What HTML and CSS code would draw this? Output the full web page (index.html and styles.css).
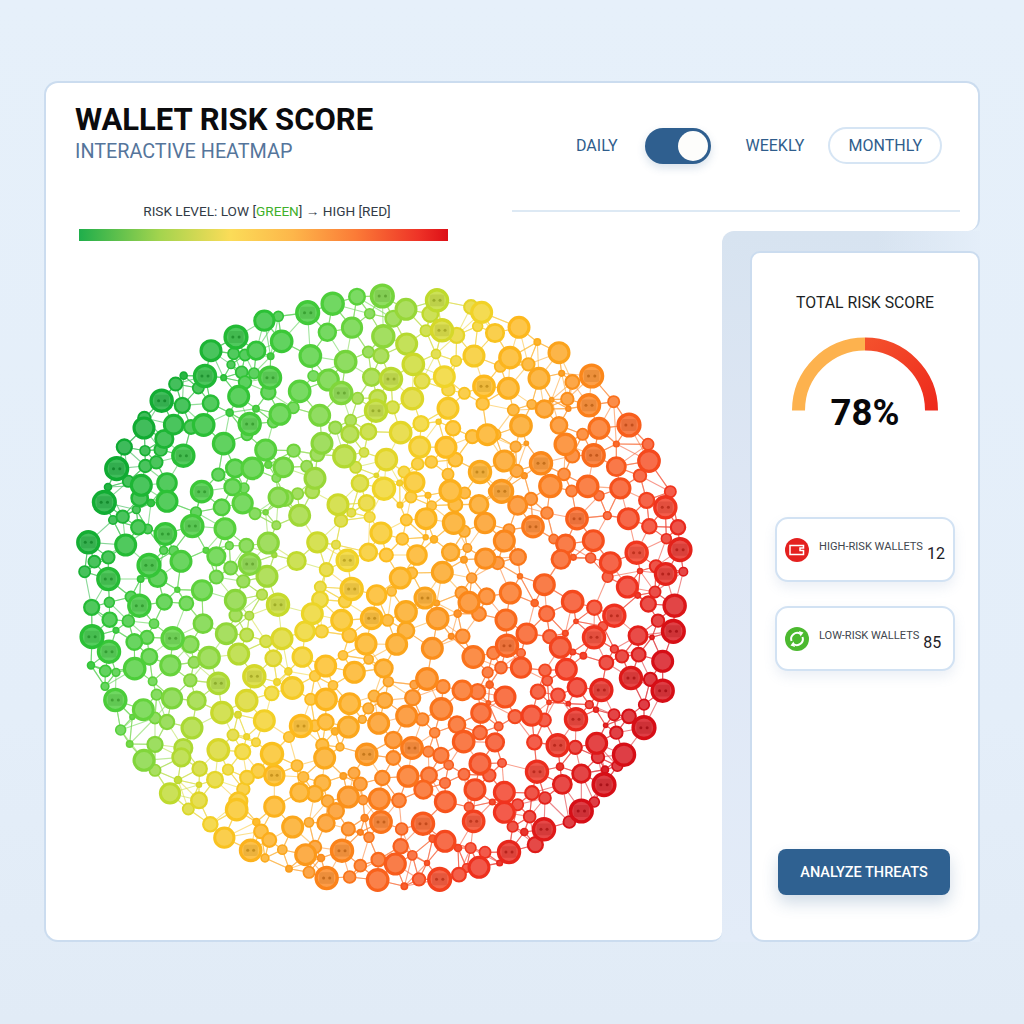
FILE: index.html
```html
<!DOCTYPE html>
<html lang="en">
<head>
    <meta charset="UTF-8">
    <title>Wallet Risk Score</title>
    <link rel="stylesheet" href="styles.css">
</head>
<body>
    <div class="dashboard">
        <div class="top-card">
            <div class="title-block">
                <h1>WALLET RISK SCORE</h1>
                <p>INTERACTIVE HEATMAP</p>
            </div>
            <div class="top-right">
                <div class="range-controls">
                    <span class="range-daily">DAILY</span>
                    <div class="toggle"><div class="knob"></div></div>
                    <span class="range-weekly">WEEKLY</span>
                    <span class="range-monthly">MONTHLY</span>
                </div>
                <div class="divider"></div>
            </div>
        </div>
        <div class="main-row">
            <div class="heatmap">
                <div class="legend">
                    <div class="legend-text">RISK LEVEL: LOW [<span class="green">GREEN</span>] → HIGH [RED]</div>
                    <div class="legend-bar"></div>
                </div>
                <svg id="network" class="network" viewBox="60 280 650 620"></svg>
            </div>
            <div class="side-area">
                <div class="side-card">
                    <h2>TOTAL RISK SCORE</h2>
                    <svg class="gauge" width="146" height="76" viewBox="0 0 146 76">
                        <defs>
                            <linearGradient id="gaugeRed" x1="0" y1="0" x2="1" y2="1">
                                <stop offset="0" stop-color="#f4502c"/>
                                <stop offset="1" stop-color="#ee2a1c"/>
                            </linearGradient>
                        </defs>
                        <path d="M6.5 74.500 A66.500 66.500 0 0 1 73 8" fill="none" stroke="#fdb24e" stroke-width="13"/>
                        <path d="M73 8 A66.500 66.500 0 0 1 139.500 74.500" fill="none" stroke="url(#gaugeRed)" stroke-width="13"/>
                    </svg>
                    <div class="gauge-value">78%</div>
                    <div class="stat stat-first">
                        <div class="stat-icon red">
                            <svg width="24" height="24" viewBox="0 0 24 24">
                                <path d="M5 7.500 H18.500 V10 H15 V12.500 H18.500 V16.500 H5 Z" fill="none" stroke="#fff" stroke-width="1.500"/>
                            </svg>
                        </div>
                        <span class="stat-label">HIGH-RISK WALLETS</span>
                        <span class="stat-value">12</span>
                    </div>
                    <div class="stat">
                        <div class="stat-icon green">
                            <svg width="24" height="24" viewBox="0 0 24 24">
                                <path d="M6.500 14 A6 6 0 0 1 15.500 7" fill="none" stroke="#fff" stroke-width="2"/>
                                <path d="M17.500 10 A6 6 0 0 1 8.500 17" fill="none" stroke="#fff" stroke-width="2"/>
                                <path d="M14 4 L18.500 5.500 L15.500 9.500 Z" fill="#fff"/>
                                <path d="M10 20 L5.500 18.500 L8.500 14.500 Z" fill="#fff"/>
                            </svg>
                        </div>
                        <span class="stat-label">LOW-RISK WALLETS</span>
                        <span class="stat-value">85</span>
                    </div>
                    <button class="analyze">ANALYZE THREATS</button>
                </div>
            </div>
        </div>
    </div>
    <script src="script.js"></script>
</body>
</html>
```

FILE: styles.css
```css
* {
    margin: 0;
    padding: 0;
    box-sizing: border-box;
}

body {
    font-family: Roboto, "Liberation Sans", sans-serif;
    background: linear-gradient(180deg, #e6f0fa 0%, #e4eef9 70%, #e1ebf6 100%);
    height: 1024px;
    overflow: hidden;
}

.dashboard {
    width: 936px;
    margin: 81px 0 0 44px;
}

.top-card {
    height: 150px;
    display: flex;
    justify-content: space-between;
    background-color: white;
    border: 2px solid #cbdcef;
    border-bottom: none;
    border-radius: 14px 14px 12px 0;
}

.title-block {
    padding: 18px 0 0 29px;
}

h1 {
    font-size: 31px;
    line-height: 38px;
    font-weight: 700;
    color: #0b0b0d;
}

.title-block p {
    font-size: 19.800px;
    line-height: 24px;
    margin-top: 1px;
    color: #55759b;
}

.top-right {
    width: 448px;
    margin-right: 18px;
}

.range-controls {
    display: flex;
    align-items: center;
    margin-top: 44px;
    padding-left: 64px;
    font-size: 16px;
    color: #2f5d8c;
}

.toggle {
    width: 66px;
    height: 36px;
    margin: 0 34px 0 28px;
    padding: 3px;
    display: flex;
    justify-content: flex-end;
    border-radius: 18px;
    background-color: #2f5f8f;
    box-shadow: 0 4px 8px rgba(47, 95, 143, 0.18);
}

.knob {
    width: 30px;
    height: 30px;
    border-radius: 50%;
    background-color: #fdfdfb;
}

.range-monthly {
    width: 114px;
    height: 37px;
    margin-left: 24px;
    display: flex;
    justify-content: center;
    align-items: center;
    border: 2px solid #d6e5f4;
    border-radius: 19px;
}

.divider {
    height: 2px;
    margin-top: 46px;
    background-color: #dde9f4;
}

.main-row {
    display: flex;
    height: 711px;
    background: linear-gradient(#fff, #fff) no-repeat left top / 700px 40px;
}

.heatmap {
    width: 678px;
    background-color: white;
    border: 2px solid #cbdcef;
    border-top: none;
    border-right: none;
    border-radius: 0 0 10px 14px;
}

.legend {
    width: 369px;
    margin: -28px 0 0 33px;
    position: relative;
}

.legend-text {
    padding-left: 7px;
    font-size: 13.600px;
    line-height: 16px;
    text-align: center;
    white-space: nowrap;
    color: #333c47;
}

.green {
    color: #3fb02a;
}

.legend-bar {
    height: 12px;
    margin-top: 10px;
    background: linear-gradient(90deg, #1fae4b 0%, #a4d44e 22%, #fbdc58 41%, #fdb64a 58%, #fb7b37 75%, #ee3327 92%, #dd0f17 100%);
}

.network {
    display: block;
    width: 650px;
    height: 620px;
    margin: 37px 0 0 14px;
}

.side-area {
    flex: 1;
    padding: 20px 0 0 28px;
    border-radius: 12px 0 0 0;
    background:
        linear-gradient(90deg, rgba(228, 238, 249, 0) 60%, #e4eef9 100%),
        linear-gradient(180deg, #d7e3f0 0%, #dfe7f5 45%, #e3ecf8 100%);
}

.side-card {
    height: 691px;
    display: flex;
    flex-direction: column;
    align-items: center;
    padding-top: 40px;
    background-color: white;
    border: 2px solid #cbdcef;
    border-radius: 10px 10px 14px 14px;
}

h2 {
    font-size: 15.800px;
    line-height: 20px;
    font-weight: 400;
    color: #1c1f24;
}

.gauge {
    display: block;
    margin-top: 23px;
}

.gauge-value {
    margin-top: -20px;
    font-size: 36.500px;
    line-height: 42px;
    font-weight: 700;
    color: #08080a;
}

.stat {
    width: 180px;
    height: 65px;
    margin-top: 24px;
    padding-left: 8px;
    display: flex;
    align-items: center;
    background-color: white;
    border: 2px solid #d2e2f3;
    border-radius: 13px;
    box-shadow: 0 6px 12px rgba(120, 150, 190, 0.14);
}

.stat-first {
    margin-top: 83px;
}

.stat-icon {
    width: 24px;
    height: 24px;
    flex-shrink: 0;
    border-radius: 50%;
}

.stat-icon.red {
    background-color: #e4201f;
}

.stat-icon.green {
    background-color: #4cb92f;
}

.stat-label {
    margin-left: 10px;
    padding-bottom: 6px;
    font-size: 11.100px;
    white-space: nowrap;
    color: #41464d;
}

.stat-value {
    margin-left: 4px;
    padding-top: 8px;
    font-size: 16px;
    color: #1e2126;
}

.analyze {
    width: 172px;
    height: 46px;
    margin-top: auto;
    margin-right: 2px;
    margin-bottom: 45px;
    border: none;
    border-radius: 8px;
    font-family: inherit;
    font-size: 14.500px;
    font-weight: 500;
    color: white;
    background-color: #2f6191;
    box-shadow: 0 8px 16px rgba(47, 97, 145, 0.22);
}
```

FILE: script.js
```js
// node positions read per tile: "x,y,r" or "x,y,r,1" for a wallet face, in 3x tile coordinates
const tiles = [
    [75, 285, "568,113,31;610,100,16;620,175,33;483,162,35,1;408,203,32;544,203,28;476,212,18;510,216,18;587,220,11;468,245,13;390,279,34,1;500,268,19;537,271,17;585,284,34,1;326,278,12;302,303,21;370,315,18;510,298,20;446,284,10;580,328,23;491,340,32;260,353,34,1;322,367,24;407,361,25;543,377,11;464,389,12;615,394,32;208,405,20;207,435,32;296,425,30;386,426,33;348,432,22;524,423,34,1;595,417,18;268,468,28;148,492,24;446,482,33;572,501,32;210,503,16;257,500,20;325,518,34,1;516,455,18;125,557,35,1;211,549,20;244,538,20;430,575,20;480,556,28;532,556,33;625,553,30;580,545,12;99,612,12;160,595,18;199,607,32;276,600,30;380,626,33,1;473,612,26;507,615,16;604,585,14;88,658,35,1;194,645,26;228,660,12;276,655,32;440,673,25;503,661,31;610,643,30;540,692,18;184,680,13;572,688,9;363,688,17;143,701,20;114,711,14;190,733,23;218,738,15;352,729,34,1;450,737,32;271,753,33,1;604,727,14;40,778,34,1;152,786,32;100,823,20;58,836,19;266,802,13;296,803,15;514,788,22;580,780,32;393,802,10;463,788,13;222,847,35,1;318,835,32;424,820,28;524,843,33,1;467,855,21;598,816,9;29,866,18;100,888,34,1;248,885,28;424,882,21;576,880,32;197,888,11;505,895,20"],
    [285, 285, "143,62,34;68,89,35,1;216,41,25;292,39,35,1;456,52,34,1;363,79,32;558,72,22;590,88,32;436,93,25;325,107,25;254,92,16;127,148,27;201,134,31;471,142,34,1;423,143,18;515,157,24;630,150,28;578,130,16;295,160,34;365,183,32;76,219,33;182,236,33;250,207,18;288,218,24;453,213,15;513,234,17;567,219,32;385,244,33;85,279,17;260,283,27;318,288,34,1;478,281,32;411,294,24;130,291,32;44,325,33;169,330,34,1;597,310,33,1;538,331,18;218,346,18;278,345,26;382,347,33;490,320,20;593,362,20;25,374,18;273,383,34,1;323,373,20;489,376,32;104,397,32;197,412,18;151,434,20;408,422,24;504,436,23;461,416,9;562,461,21;607,455,32;250,446,25;195,453,27;347,449,33;111,481,32;404,492,32;483,493,32;178,520,34;26,503,20;97,514,22;237,508,15;304,530,33;511,530,22;398,543,19;439,537,19;65,550,18;212,553,18;0,553,30;585,567,34,1;357,567,18;489,574,18;90,586,32;225,601,26;388,598,31;496,624,33;344,600,10;297,617,34;274,577,8;82,625,22;38,632,18;630,625,20;539,630,18;378,642,18;0,645,25;429,637,10;159,665,32;245,660,25;582,664,29;511,665,22;44,697,32;345,666,10;199,689,14;254,702,17;440,668,15;168,713,20;423,707,32;506,720,33;600,720,31;364,711,18;288,750,32;538,745,18;97,778,31;352,768,19;153,785,14;422,763,9;447,769,12;547,795,14;250,808,27;304,816,21;396,816,30;497,808,27;601,827,31;35,834,28;187,832,33,1;537,830,11;124,860,21;472,868,32;346,885,32;380,870,18;560,885,16"],
    [495, 285, "72,133,32;5,150,22;127,177,11;192,209,32;45,224,33;100,244,20;16,250,18;290,279,35,1;132,286,32;232,297,22;200,271,10;40,316,32;282,367,34,1;356,356,18;217,348,20;110,364,15;148,378,27;55,381,18;170,350,8;220,377,9;78,428,33;402,426,35,1;312,436,32;192,427,26;263,454,18;0,455,18;459,484,18;364,483,10;211,484,33;62,491,17;94,481,8;232,518,22;296,517,34,1;138,541,34,1;28,534,32;462,534,33;364,551,29;65,564,20;207,574,19;435,578,20;88,578,10;166,609,34;278,610,33;230,624,18;376,616,31;526,626,18;312,638,16;20,625,35,1;108,648,20;68,667,29;156,690,19;455,652,24;511,673,34,1;246,707,33,1;337,698,13;400,707,32;114,731,33,1;42,740,18;463,730,23;549,733,23;295,773,32;28,774,32;176,768,15;212,783,29;514,767,16;555,800,35,1;425,809,34,1;198,829,29;69,822,25;287,825,16;346,839,32;235,823,10;483,850,20;512,873,33,1;565,866,14;435,864,9;75,880,9;338,882,17;8,840,20"],
    [75, 585, "50,73,24;103,58,16;168,42,18;193,68,34,1;268,57,24;334,61,22;307,20,9;381,22,31;481,52,32;561,35,17;609,65,34,1;104,110,23;160,114,19;523,98,14;482,97,20;384,122,29;237,122,15;123,142,10;454,152,32;515,156,21;51,161,35,1;178,177,25;216,163,21;293,166,34,1;346,184,26;621,167,32;573,175,19;102,206,34,1;223,221,25;402,224,33;491,213,32;595,226,25;48,247,12;91,264,18;123,268,13;179,257,33;286,247,31;357,238,18;538,280,34,1;346,292,20;233,295,14;430,301,33,1;606,297,11;90,310,13;245,335,17;515,353,33;590,331,22;121,351,34,1;291,346,31;365,353,28;205,380,32;441,389,33;489,395,11;568,413,32;240,405,18;276,417,23;172,402,9;137,441,16;351,435,32;474,456,18;164,483,11;515,461,10;543,478,14;240,484,24;325,495,28;430,501,33;503,506,24;591,513,34;207,532,32;319,523,28;374,557,23;459,560,17;240,562,18;550,564,22;598,577,31,1;516,584,22;420,590,25;309,591,12;372,605,9;285,631,31;505,618,20;372,652,25;340,678,18;485,680,33;490,655,28;598,671,31;406,724,23;544,717,12;558,745,22;448,764,31;583,771,22;527,802,33,1;570,825,13;622,800,15"],
    [285, 585, "106,12,18;200,18,34,1;275,36,30;420,45,32,1;320,25,15;105,50,25;180,55,20;552,58,32;605,40,25;530,30,20;363,87,33;82,92,32;170,112,32;260,106,33,1;458,107,33;308,112,18;582,93,22;518,92,12;455,60,10;60,145,30;110,145,20;193,157,22;363,143,26;533,160,22;499,160,10;243,183,32;335,184,32;442,196,32;174,217,15;52,222,30;251,229,15;565,222,33;625,210,20;122,249,32;296,256,28;208,268,32;608,268,17;10,265,12;90,279,17;310,296,16;426,288,33;22,315,33;144,307,15;474,311,21;532,322,30;578,326,24;614,305,12;388,305,14;123,349,33;77,349,18;267,339,18;299,352,24;383,344,24;194,362,32;469,378,33;250,376,17;588,390,30;610,360,8;365,399,32;412,409,20;48,429,34,1;122,417,25;190,432,32;281,421,32;232,409,13;90,428,18;516,425,26;12,462,17;150,445,12;325,471,26;381,495,33,1;449,449,16;585,449,22;536,476,33;630,478,28;112,486,20;165,492,13;468,517,24;430,506,17;119,525,32;245,514,33,1;325,525,22;585,542,32;36,548,18;491,546,15;207,570,18;537,574,18;175,579,11;432,577,25;55,582,17;369,580,32;292,585,23;613,577,20;112,600,25;480,600,17;226,603,21;415,620,28;570,620,32;44,628,29;89,632,25;190,642,32;283,648,32;342,652,22;128,654,19;234,651,15;481,656,32;153,684,25;552,672,15;622,657,10;239,705,12;23,732,32;72,718,15;123,720,27;288,717,33,1;414,722,34,1;566,715,33,1;190,738,21;350,738,19;226,748,10;252,763,16;480,775,32;443,767,12;347,790,23;557,795,17;62,815,32;171,803,34,1;90,792,20;5,800,15;519,795,12;600,808,18;108,825,12;382,817,15;280,830,22;331,843,32;226,848,19;426,840,9;582,853,32;12,857,11;72,868,18;125,885,34,1;194,882,19;278,891,33;402,889,20;464,889,35,1;522,875,22;545,855,14;358,910,11"],
    [495, 585, "46,30,32;148,5,32;233,56,33;397,12,32;298,74,23;358,98,34,1;460,63,24;480,27,18;539,68,34;428,37,10;119,60,12;33,111,32;155,92,24;243,115,8;489,113,20;535,145,35,1;95,152,31;164,161,21;211,151,10;297,163,34,1;429,158,29;324,130,15;471,163,8;36,188,34,1;196,193,32;78,210,14;358,198,13;381,220,20;265,218,11;233,207,10;431,215,22;503,235,32;18,254,19;78,254,31;214,259,32;334,239,22;150,262,19;408,285,34,1;466,289,21;157,293,16;246,313,29;319,321,34,1;503,323,34,1;129,326,23;189,337,22;30,342,32;162,358,8;220,362,8;283,365,13;447,365,17;303,380,9;60,401,21;110,398,31;148,411,21;243,409,34,1;357,395,18;402,400,22;447,434,35,1;11,430,14;332,427,8;364,449,20;14,480,28;118,478,23;188,487,34,1;241,493,21;305,481,32;387,515,34;309,522,20;21,540,14;367,549,17;126,566,34,1;195,551,12;259,572,28;330,560,12;202,604,29;327,605,35,1;28,628,32;111,630,22;150,645,19;68,665,18;298,657,16;28,688,32;259,684,35,1;104,701,19;53,731,17;223,717,19;147,739,34,1;88,747,12;121,785,24;42,807,34,1;14,840,10"]
];

const colorStops = [
    [50, [14, 170, 50]],
    [130, [48, 196, 55]],
    [200, [90, 210, 60]],
    [250, [143, 215, 58]],
    [285, [196, 218, 44]],
    [330, [240, 212, 40]],
    [370, [253, 187, 29]],
    [430, [251, 164, 28]],
    [490, [251, 127, 26]],
    [550, [248, 88, 28]],
    [625, [240, 50, 30]],
    [700, [214, 14, 22]]
];

function colorAt(x, y) {
    const s = x + 0.54 * (y - 590);
    if (s <= colorStops[0][0]) return colorStops[0][1];
    for (let i = 1; i < colorStops.length; i++) {
        if (s <= colorStops[i][0]) {
            const a = colorStops[i - 1];
            const b = colorStops[i];
            const t = (s - a[0]) / (b[0] - a[0]);
            return a[1].map((v, k) => Math.round(v + (b[1][k] - v) * t));
        }
    }
    return colorStops[colorStops.length - 1][1];
}

const rgb = (c) => `rgb(${c[0]},${c[1]},${c[2]})`;
const mix = (c, to, t) => c.map((v) => Math.round(v + (to - v) * t));

const nodes = [];
tiles.forEach(([ox, oy, text]) => {
    text.split(';').forEach((item) => {
        const [zx, zy, zr, face] = item.split(',').map(Number);
        const node = { x: ox + zx / 3, y: oy + zy / 3, r: zr / 3 * 1.08, face: face === 1 };
        // tiles overlap a little, skip what was already read
        const known = nodes.some((n) => Math.hypot(n.x - node.x, n.y - node.y) < 6);
        if (!known) nodes.push(node);
    });
});

let edges = '';
nodes.forEach((n) => {
    const near = nodes
        .filter((m) => m !== n)
        .map((m) => ({ m, d: Math.hypot(m.x - n.x, m.y - n.y) }))
        .sort((a, b) => a.d - b.d)
        .slice(0, 5);
    near.forEach(({ m, d }) => {
        if (d < 58) {
            const c = mix(colorAt(n.x, n.y), 255, 0.15);
            edges += `<line x1="${n.x}" y1="${n.y}" x2="${m.x}" y2="${m.y}" stroke="${rgb(c)}" stroke-width="1.1" stroke-opacity="0.6"/>`;
        }
    });
});

let circles = '';
nodes.sort((a, b) => a.r - b.r).forEach((n) => {
    const c = colorAt(n.x, n.y);
    const sw = Math.min(3.4, Math.max(1.6, n.r * 0.27));
    const fill = n.r < 4.5 ? rgb(mix(c, 255, 0.08)) : rgb(mix(c, 255, 0.2));
    circles += `<circle cx="${n.x}" cy="${n.y}" r="${n.r - sw / 2}" fill="${fill}" stroke="${rgb(c)}" stroke-width="${sw}"/>`;
    if (n.face) {
        const dark = rgb(mix(c, 0, 0.25));
        const w = n.r * 1.2;
        const h = n.r * 0.95;
        circles += `<rect x="${n.x - w / 2}" y="${n.y - h / 2}" width="${w}" height="${h}" rx="2.5" fill="${dark}" fill-opacity="0.25"/>`;
        circles += `<circle cx="${n.x - n.r * 0.25}" cy="${n.y}" r="1.5" fill="${dark}" fill-opacity="0.8"/>`;
        circles += `<circle cx="${n.x + n.r * 0.25}" cy="${n.y}" r="1.5" fill="${dark}" fill-opacity="0.8"/>`;
    }
});

document.getElementById('network').innerHTML = edges + circles;
```
